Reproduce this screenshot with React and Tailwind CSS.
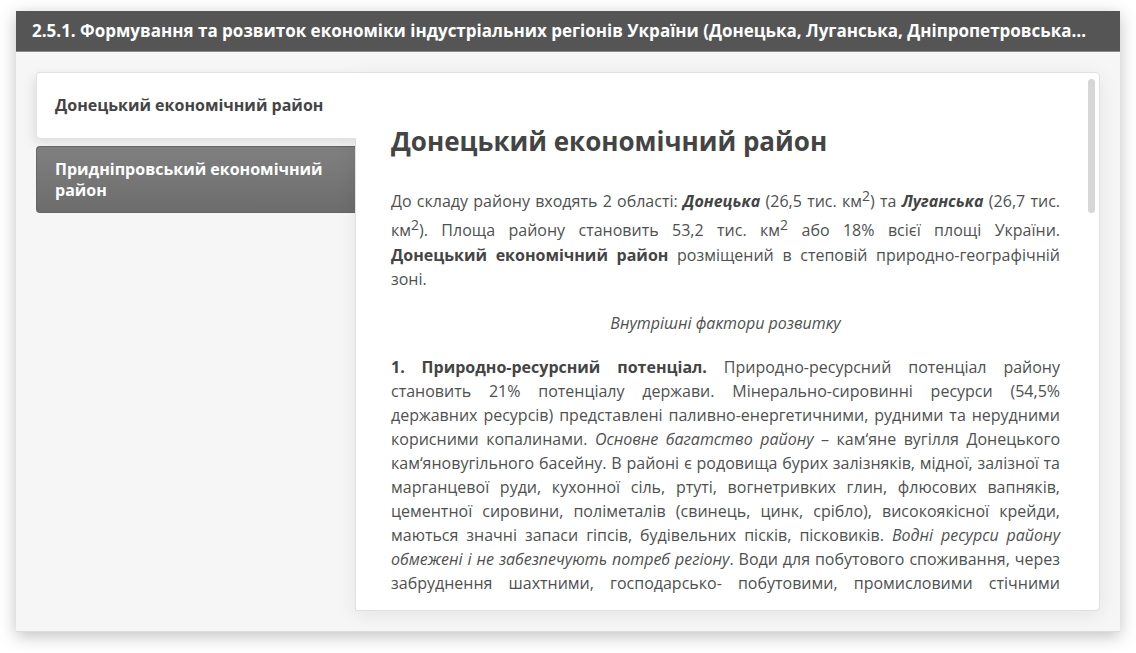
import { useState } from "react";

const tabs = ["Донецький економічний район", "Придніпровський економічний район"];

function Squared() {
  return <sup className="static align-super text-[14px] leading-6">2</sup>;
}

export default function App() {
  const [active, setActive] = useState(0);

  return (
    <main className="flex h-screen min-h-96 flex-col bg-white px-4 pt-[11px] pb-[21px] font-['Open_Sans','Noto_Sans',sans-serif] text-[#444]">
      <section className="flex min-h-0 flex-1 flex-col border-b border-[#dcdcdc] bg-[#f6f6f6] shadow-[0_4px_16px_rgba(0,0,0,0.25)]">
        <header className="border-b border-[#8a8a8a] bg-[#555] px-4 py-2">
          <h1 className="truncate text-[17px] leading-6 font-bold text-white">
            2.5.1. Формування та розвиток економіки індустріальних регіонів України (Донецька, Луганська, Дніпропетровська…
          </h1>
        </header>

        <div className="flex min-h-0 flex-1 p-5">
          <div role="tablist" aria-orientation="vertical" className="flex w-[319px] shrink-0 flex-col gap-[7px]">
            {tabs.map((tab, i) => (
              <button
                key={tab}
                type="button"
                role="tab"
                id={`tab-${i}`}
                aria-controls="panel"
                aria-selected={active === i}
                onClick={() => setActive(i)}
                className={
                  active === i
                    ? "relative z-10 -mr-px min-h-[67px] cursor-pointer rounded-l border border-r-0 border-[#e2e2e2] bg-white px-[18px] text-left text-base leading-[21px] font-bold text-[#444] shadow-[-2px_4px_12px_rgba(0,0,0,0.10)] [clip-path:inset(-20px_0_-20px_-20px)]"
                    : "min-h-[67px] cursor-pointer rounded-l border border-r-0 border-[#666] bg-linear-to-b from-[#808080] to-[#6c6c6c] px-[18px] text-left text-base leading-[21px] font-bold text-white"
                }
              >
                {tab}
              </button>
            ))}
          </div>

          <div className="relative flex min-h-0 min-w-0 flex-1 rounded-r border border-[#e0e0e0] bg-white shadow-[0_4px_20px_rgba(0,0,0,0.08)]">
            <article
              id="panel"
              role="tabpanel"
              aria-labelledby={`tab-${active}`}
              tabIndex={0}
              className="flex-1 overflow-y-auto pt-12 pr-[39px] pb-3 pl-[35px] text-base leading-6 text-[#505050] outline-none [scrollbar-width:none]"
            >
              <h2 className="mb-[23px] text-[26px] leading-10 font-bold text-[#444]">{tabs[active]}</h2>
              <p className="mb-5 text-justify">
                До складу району входять 2 області: <strong className="text-[#444]"><em>Донецька</em></strong> (26,5 тис. км
                <Squared />) та <strong className="text-[#444]"><em>Луганська</em></strong> (26,7 тис. км
                <Squared />). Площа району становить 53,2 тис. км
                <Squared /> або 18% всієї площі України.{" "}
                <strong className="text-[#444]">Донецький{"\u00a0"}економічний{"\u00a0"}район</strong> розміщений в степовій
                природно-географічній зоні.
              </p>
              <p className="mb-5 text-center italic">Внутрішні фактори розвитку</p>
              <p className="text-justify [text-align-last:justify]">
                <strong className="text-[#444]">1. Природно-ресурсний потенціал.</strong> Природно-ресурсний потенціал району становить 21%
                потенціалу держави. Мінерально-сировинні ресурси (54,5% державних ресурсів) представлені
                паливно-енергетичними, рудними та нерудними корисними копалинами. <em>Основне багатство району</em> –
                кам‘яне вугілля Донецького кам‘яновугільного басейну. В районі є родовища бурих залізняків, мідної,
                залізної та марганцевої руди, кухонної сіль, ртуті, вогнетривких глин, флюсових вапняків, цементної
                сировини, поліметалів (свинець, цинк, срібло), високоякісної крейди, маються значні запаси гіпсів,
                будівельних пісків, пісковиків. <em>Водні ресурси району обмежені і не забезпечують потреб регіону</em>.
                Води для побутового споживання, через забруднення шахтними, господарсько- побутовими, промисловими
                стічними
              </p>
            </article>
            <div aria-hidden="true" className="absolute top-1.5 right-1 h-1/4 w-[7px] rounded-full bg-[#d6d6d6]" />
          </div>
        </div>
      </section>
    </main>
  );
}
